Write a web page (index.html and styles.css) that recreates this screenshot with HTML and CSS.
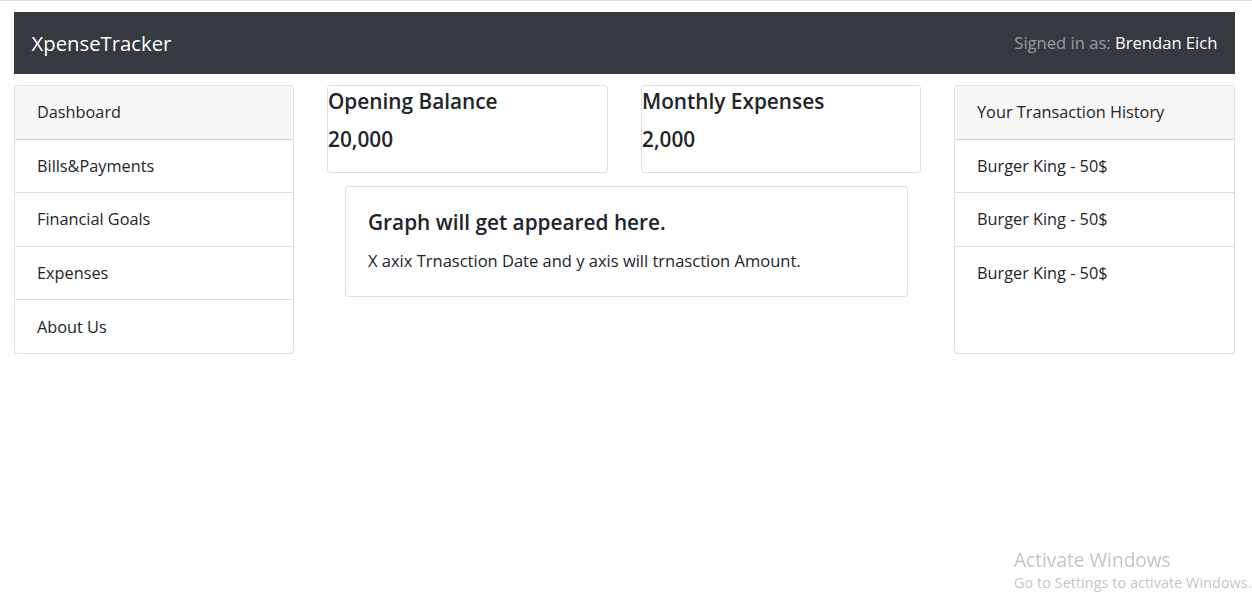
FILE: index.html
```html
<!DOCTYPE html>
<html lang="en">
<head>
<meta charset="utf-8">
<title>XpenseTracker</title>
<link rel="stylesheet" href="styles.css">
</head>
<body>
<div class="page">
  <nav class="navbar">
    <span class="brand">XpenseTracker</span>
    <span class="signed">Signed in as: <span class="user">Brendan Eich</span></span>
  </nav>
  <div class="layout">
    <div class="card list-card">
      <div class="card-header">Dashboard</div>
      <div class="list-item">Bills&amp;Payments</div>
      <div class="list-item">Financial Goals</div>
      <div class="list-item">Expenses</div>
      <div class="list-item last">About Us</div>
    </div>
    <div class="middle">
      <div class="stats">
        <div class="card stat">
          <h5 class="stat-title">Opening Balance</h5>
          <h5 class="stat-value">20,000</h5>
        </div>
        <div class="card stat">
          <h5 class="stat-title">Monthly Expenses</h5>
          <h5 class="stat-value">2,000</h5>
        </div>
      </div>
      <div class="card graph">
        <h5 class="graph-title">Graph will get appeared here.</h5>
        <p class="graph-text">X axix Trnasction Date and y axis will trnasction Amount.</p>
      </div>
    </div>
    <div class="card list-card">
      <div class="card-header">Your Transaction History</div>
      <div class="list-item">Burger King - 50$</div>
      <div class="list-item">Burger King - 50$</div>
      <div class="list-item last">Burger King - 50$</div>
    </div>
  </div>
</div>
<div class="watermark">
  <div class="wm-title">Activate Windows</div>
  <div class="wm-sub">Go to Settings to activate Windows.</div>
</div>
</body>
</html>
```

FILE: styles.css
```css
html, body {
  margin: 0;
  padding: 0;
}
body {
  border-top: 1px solid #dcdde0;
  font-family: "Segoe UI", "Open Sans", "Noto Sans", sans-serif;
  font-size: 16.3px;
  line-height: 26.4px;
  color: #212529;
  background: #fff;
  height: 608px;
  overflow: hidden;
}
.page {
  padding: 11px 17px 0 14px;
}
.navbar {
  background: #343a40;
  height: 62px;
  box-sizing: border-box;
  padding: 0 17.6px;
  display: flex;
  align-items: center;
  justify-content: space-between;
}
.brand {
  color: #fff;
  font-size: 20.3px;
  line-height: 33px;
}
.signed {
  color: rgba(255, 255, 255, 0.5);
  font-size: 16.6px;
}
.user {
  color: #fff;
}
.layout {
  margin-top: 11px;
  display: grid;
  grid-template-columns: 280px 594px 281px;
  column-gap: 33px;
  align-items: stretch;
}
.card {
  border: 1px solid rgba(0, 0, 0, 0.125);
  border-radius: 4px;
  background: #fff;
  box-sizing: border-box;
}
.list-card {
  display: flex;
  flex-direction: column;
  overflow: hidden;
}
.card-header {
  background: #f7f7f7;
  padding: 13.2px 22px 13px;
  border-bottom: 1px solid rgba(0, 0, 0, 0.125);
}
.list-item {
  padding: 13.2px 22px 13px;
  border-bottom: 1px solid rgba(0, 0, 0, 0.125);
}
.list-item.last {
  border-bottom: 0;
}
.middle {
  display: flex;
  flex-direction: column;
}
.stats {
  display: grid;
  grid-template-columns: 281px 280px;
  column-gap: 33px;
}
.stat {
  height: 88px;
  padding-top: 2px;
}
h5 {
  margin: 0;
  font-size: 20.8px;
  font-weight: 600;
  line-height: 26.4px;
}
.stat-title {
  margin-bottom: 12px;
}
.graph {
  margin-top: 13px;
  margin-left: 18px;
  width: 563px;
  padding: 21.5px 22px;
}
.graph-title {
  margin-bottom: 13.2px;
}
.graph-text {
  margin: 0;
  font-size: 16.5px;
}
.watermark {
  position: fixed;
  left: 1014px;
  top: 547px;
  color: #c4c4c4;
  font-family: "Segoe UI", "Open Sans", "Noto Sans", sans-serif;
  white-space: nowrap;
}
.wm-title {
  font-size: 19.1px;
  line-height: 26px;
}
.wm-sub {
  font-size: 14.5px;
  line-height: 20px;
}
```
